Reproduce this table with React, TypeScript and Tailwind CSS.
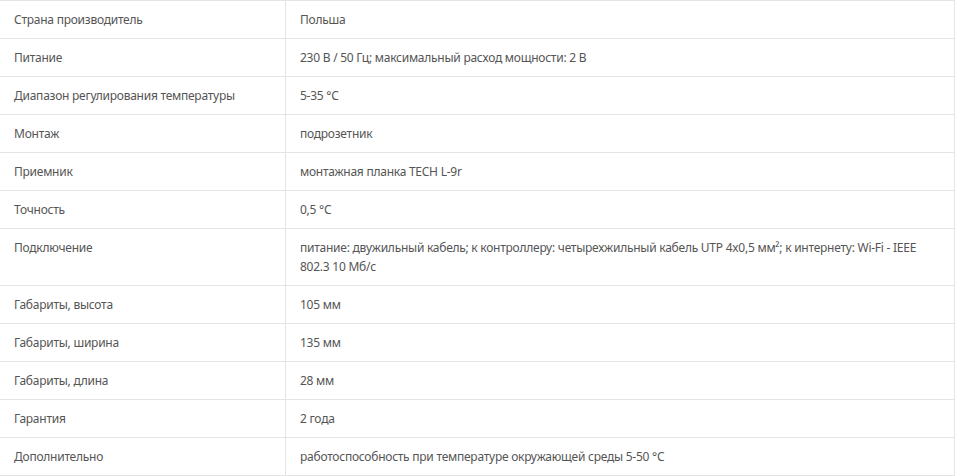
import React from "react";

const specs: [string, string][] = [
  ["Страна производитель", "Польша"],
  ["Питание", "230 В / 50 Гц; максимальный расход мощности: 2 В"],
  ["Диапазон регулирования температуры", "5-35 °C"],
  ["Монтаж", "подрозетник"],
  ["Приемник", "монтажная планка TECH L-9r"],
  ["Точность", "0,5 °C"],
  [
    "Подключение",
    "питание: двужильный кабель; к контроллеру: четырехжильный кабель UTP 4x0,5 мм²; к интернету: Wi-Fi - IEEE 802.3 10 Мб/с",
  ],
  ["Габариты, высота", "105 мм"],
  ["Габариты, ширина", "135 мм"],
  ["Габариты, длина", "28 мм"],
  ["Гарантия", "2 года"],
  ["Дополнительно", "работоспособность при температуре окружающей среды 5-50 °C"],
];

export default function App() {
  return (
    <div className="bg-white w-[958px] h-[476px] font-['Noto_Sans',sans-serif] text-[12px] leading-[19px] tracking-[-0.25px] text-[#555]">
      <div className="w-[955px] border-t border-r border-[#e4e4e4]">
        {specs.map(([name, value], i) => (
          <div key={i} className="grid grid-cols-[286px_1fr] border-b border-[#e4e4e4]">
            <div className="border-r border-[#e4e4e4] px-[14px] py-[9px]">{name}</div>
            <div className="px-[14px] py-[9px]">{value}</div>
          </div>
        ))}
      </div>
    </div>
  );
}
